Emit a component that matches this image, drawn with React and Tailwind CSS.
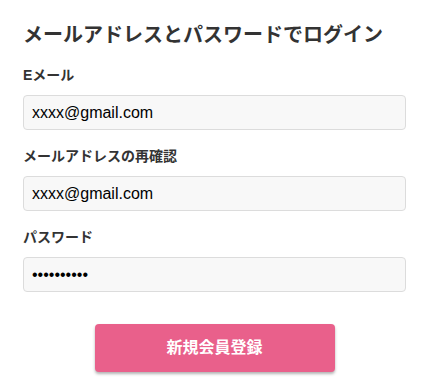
import React from "react";

const jp = { fontFamily: '"Liberation Sans", "Noto Sans CJK JP", sans-serif' };

function Field({ label, value, type = "text" }) {
  return (
    <div className="flex flex-col">
      <label className="text-[14px] leading-[20px] font-bold text-[#333]">{label}</label>
      <input
        type={type}
        defaultValue={value}
        readOnly
        className="mt-[10px] h-[35px] w-full rounded-[4px] border border-[#dcdcdc] bg-[#f8f8f8] px-[8px] text-[16px] text-black outline-none"
        style={jp}
      />
    </div>
  );
}

export default function App() {
  return (
    <div className="w-[430px] h-[384px] bg-white pl-[23px] pr-[24px] pt-[21px]" style={jp}>
      <h1 className="text-[20px] leading-[28px] font-bold text-[#333]">メールアドレスとパスワードでログイン</h1>
      <div className="mt-[16px] flex flex-col gap-[16px]">
        <Field label="Eメール" value="xxxx@gmail.com" />
        <Field label="メールアドレスの再確認" value="xxxx@gmail.com" />
        <Field label="パスワード" value="1234567890" type="password" />
      </div>
      <div className="mt-[32px] flex justify-center">
        <button className="w-[240px] h-[48px] rounded-[4px] bg-[#e9608b] text-white text-[16px] font-bold shadow-[0_2px_3px_rgba(0,0,0,0.3)]">
          新規会員登録
        </button>
      </div>
    </div>
  );
}
